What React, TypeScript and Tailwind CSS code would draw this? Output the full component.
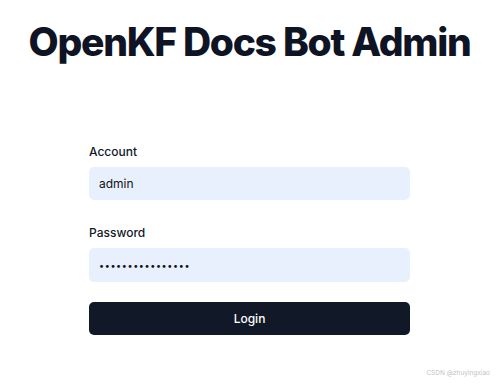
import React from "react";

export default function App() {
  return (
    <div
      className="relative w-[499px] h-[384px] bg-white overflow-hidden"
      style={{ fontFamily: "Inter, 'Noto Sans', sans-serif" }}
    >
      <div className="flex flex-col items-center">
        <h1 className="mt-[20px] text-[39px] leading-[44px] font-extrabold tracking-[-0.033em] text-[#0f1424]">
          OpenKF Docs Bot Admin
        </h1>
      </div>
      <form className="mx-[89px] mt-[78px] flex flex-col" onSubmit={(e) => e.preventDefault()}>
        <label className="text-[12px] leading-[20px] font-medium text-[#111827]">Account</label>
        <input
          className="mt-[5px] h-[33px] w-full rounded-[5px] bg-[#e8f0fe] px-[10px] text-[12px] text-[#111] outline-none"
          defaultValue="admin"
          readOnly
        />
        <label className="mt-[23px] text-[12px] leading-[20px] font-medium text-[#111827]">Password</label>
        <input
          type="password"
          className="mt-[5px] h-[34px] w-full rounded-[5px] bg-[#e8f0fe] px-[10px] text-[9px] text-[#111] outline-none tracking-[0.07em]"
          defaultValue="adminadminadmin1"
          readOnly
        />
        <button
          type="submit"
          className="mt-[20px] h-[33px] w-full rounded-[5px] bg-[#111827] text-[12px] font-medium text-white"
        >
          Login
        </button>
      </form>
      <div className="absolute right-[9px] bottom-[5px] text-[6.5px] text-[#c4c4c4]">CSDN @zhuyingxiao</div>
    </div>
  );
}
